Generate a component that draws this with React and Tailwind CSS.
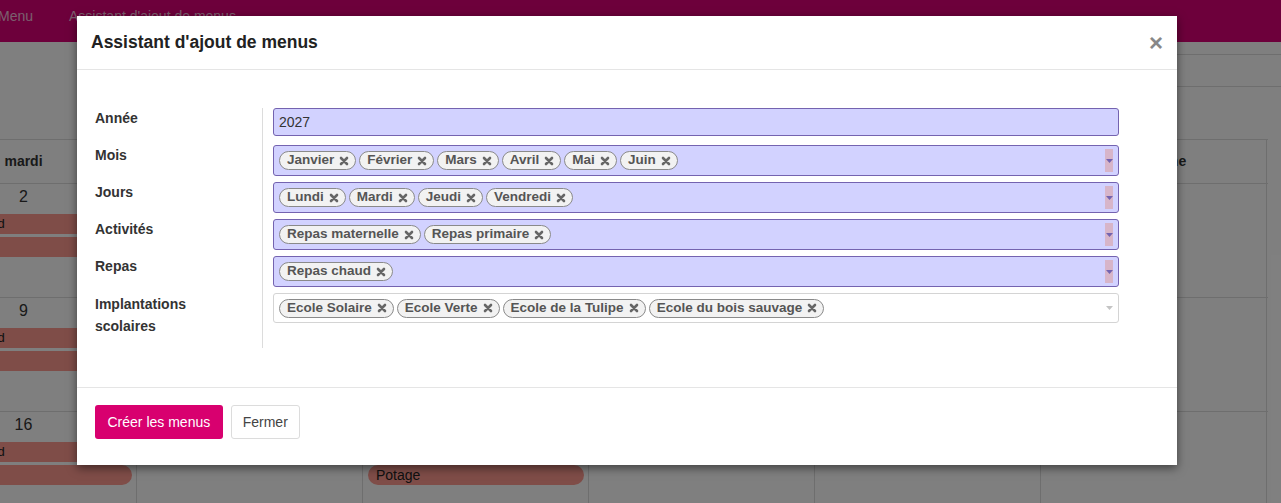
import React from 'react';

const days = ['mardi', 'mercredi', 'jeudi', 'vendredi', 'samedi', 'dimanche'];
const weeks = [
    [2, 3, 4, 5, 6, 7],
    [9, 10, 11, 12, 13, 14],
    [16, 17, 18, 19, 20, 21],
];

const fields = [
    { label: 'Mois', tags: ['Janvier', 'Février', 'Mars', 'Avril', 'Mai', 'Juin'] },
    { label: 'Jours', tags: ['Lundi', 'Mardi', 'Jeudi', 'Vendredi'] },
    { label: 'Activités', tags: ['Repas maternelle', 'Repas primaire'] },
    { label: 'Repas', tags: ['Repas chaud'] },
];

const Cross = () => (
    <svg width="10" height="10" viewBox="0 0 10 10" className="shrink-0">
        <path d="M2 2 L8 8 M8 2 L2 8" stroke="#666" strokeWidth="2.6" strokeLinecap="round" />
    </svg>
);

const Tag = ({ text }) => (
    <span className="flex h-[19px] items-center gap-[5px] rounded-full border border-[#8a8a8a] bg-[#f2f2f2] pl-[7px] pr-[6px] text-[13.5px] font-bold text-[#555]">
        {text}
        <Cross />
    </span>
);

const Caret = ({ filled }) =>
    filled ? (
        <div className="flex h-[23px] w-[8px] items-center justify-center bg-[#d7b5c9]">
            <svg width="7" height="4" viewBox="0 0 7 4">
                <path d="M0 0 L7 0 L3.5 4 Z" fill="#7463b0" />
            </svg>
        </div>
    ) : (
        <div className="flex h-[23px] w-[8px] items-center justify-center">
            <svg width="7" height="4" viewBox="0 0 7 4">
                <path d="M0 0 L7 0 L3.5 4 Z" fill="#c4c4c4" />
            </svg>
        </div>
    );

const Background = () => (
    <div className="absolute inset-0 bg-white">
        {/* Top navbar */}
        <div className="flex h-[42px] items-start gap-[36px] bg-[#da0076] pt-[6px] text-[14px] text-white/75">
            <span className="-ml-[2px]">Menu</span>
            <span>Assistant d'ajout de menus</span>
        </div>

        {/* Control panel */}
        <div className="h-[97px] pt-[12px]">
            <div className="ml-[640px] h-[33px] border-y border-[#dcdcdc]"></div>
        </div>

        {/* Calendar */}
        <div className="-ml-[89px] w-[1357px] border-t border-[#dcdcdc]">
            <div className="flex h-[44px] border-b border-[#dcdcdc]">
                {days.map((d) => (
                    <div key={d} className="flex w-[226px] items-center justify-center border-r border-[#dcdcdc] text-[14px] font-bold text-[#333]">
                        {d}
                    </div>
                ))}
            </div>
            {weeks.map((w, wi) => (
                <div key={wi} className="flex h-[114px] border-b border-[#dcdcdc]">
                    {w.map((n, di) => (
                        <div key={n} className="flex w-[226px] flex-col border-r border-[#dcdcdc]">
                            <div className="pt-[3px] text-center text-[16px] leading-[20px] text-[#333]">{n}</div>
                            <div className="mt-[7px] flex flex-col gap-[3px]">
                                {di === 0 ? (
                                    <>
                                        <div className="h-[20px] bg-[#fe9a90] pl-[17px] text-[13px] leading-[20px] text-[#222]">Repas chaud</div>
                                        <div className="mr-[4px] h-[20px] rounded-r-[10px] bg-[#fe9a90] pl-[12px] text-[13px] leading-[20px] text-[#222]">Potage</div>
                                    </>
                                ) : di === 2 && wi === 2 ? (
                                    <>
                                        <div className="mx-[4px] h-[20px] rounded-[10px] bg-[#fe9a90]"></div>
                                        <div className="ml-[5px] mr-[4px] h-[20px] rounded-[10px] bg-[#fe9a90] pl-[8px] text-[14px] leading-[20px] text-[#222]">Potage</div>
                                    </>
                                ) : null}
                            </div>
                        </div>
                    ))}
                </div>
            ))}
        </div>
    </div>
);

const App = () => {
    return (
        <div className="relative h-[503px] w-full overflow-hidden font-['Liberation_Sans',Arial,sans-serif]">
            <Background />
            <div className="absolute inset-0 bg-black/50"></div>

            {/* Modal */}
            <div className="absolute left-[77px] top-[16px] w-[1100px] bg-white shadow-[0_3px_9px_rgba(0,0,0,0.5)]">
                <div className="flex h-[54px] items-center justify-between border-b border-[#e5e5e5] px-[14px]">
                    <h4 className="text-[17.5px] font-bold text-[#222]">Assistant d'ajout de menus</h4>
                    <span className="text-[24px] font-bold leading-none text-[#888]">×</span>
                </div>

                <div className="pb-[39px] pl-[18px] pt-[38px]">
                    <div className="grid grid-cols-[168px_856px]">
                        {/* Année */}
                        <div className="h-[37px] border-r border-[#dcdcdc] text-[14px] font-bold leading-[21px] text-[#333]">Année</div>
                        <div className="h-[37px] pl-[10px]">
                            <div className="flex h-[28px] items-center rounded-[3px] border border-[#7463b0] bg-[#d2d2ff] pl-[5px] text-[14px] text-[#333]">2027</div>
                        </div>

                        {fields.map((f) => (
                            <React.Fragment key={f.label}>
                                <div className="h-[37px] border-r border-[#dcdcdc] text-[14px] font-bold leading-[21px] text-[#333]">{f.label}</div>
                                <div className="h-[37px] pl-[10px]">
                                    <div className="flex h-[31px] items-center justify-between rounded-[3px] border border-[#7463b0] bg-[#d2d2ff] px-[5px]">
                                        <div className="flex items-center gap-[3px]">
                                            {f.tags.map((t) => (
                                                <Tag key={t} text={t} />
                                            ))}
                                        </div>
                                        <Caret filled />
                                    </div>
                                </div>
                            </React.Fragment>
                        ))}

                        {/* Implantations scolaires */}
                        <div className="h-[55px] border-r border-[#dcdcdc] text-[14px] font-bold leading-[22px] text-[#333]">
                            Implantations
                            <br />
                            scolaires
                        </div>
                        <div className="h-[55px] pl-[10px]">
                            <div className="flex h-[30px] items-center justify-between rounded-[3px] border border-[#d4d4d4] bg-white px-[5px]">
                                <div className="flex items-center gap-[3px]">
                                    {['Ecole Solaire', 'Ecole Verte', 'Ecole de la Tulipe', 'Ecole du bois sauvage'].map((t) => (
                                        <Tag key={t} text={t} />
                                    ))}
                                </div>
                                <Caret />
                            </div>
                        </div>
                    </div>
                </div>

                <div className="flex h-[78px] items-start gap-[8px] border-t border-[#e5e5e5] pl-[18px] pt-[17px]">
                    <button className="h-[34px] rounded-[3px] bg-[#d8006f] px-[12.5px] text-[14px] text-white">Créer les menus</button>
                    <button className="h-[34px] rounded-[3px] border border-[#dcdcdc] bg-white px-[11px] text-[14px] text-[#444]">Fermer</button>
                </div>
            </div>
        </div>
    );
};

export default App;
